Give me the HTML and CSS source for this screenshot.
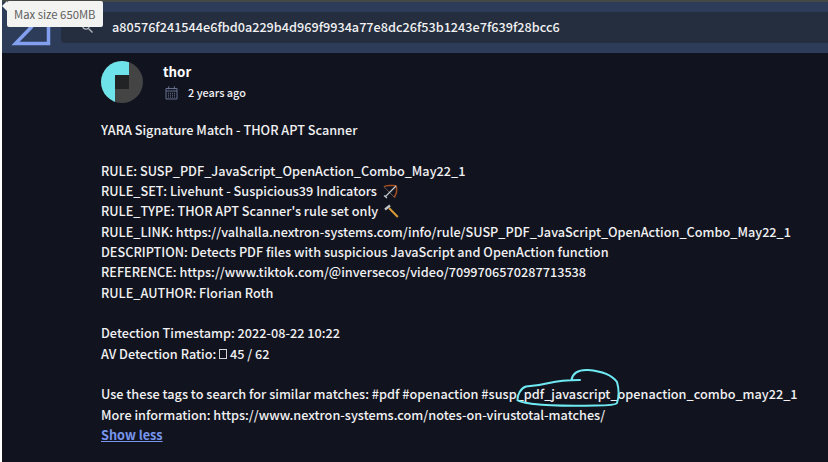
FILE: index.html
```
<!DOCTYPE html>
<html lang="en">
<head>
<meta charset="utf-8">
<title>YARA Signature Match</title>
<link rel="stylesheet" href="styles.css">
</head>
<body>
<header class="topbar">
  <svg class="logo" viewBox="0 0 40 36" aria-hidden="true"><path d="M4.500 32.500H37.500V1H4.500L20 16.500Z"/></svg>
  <div class="search">
    <svg class="search-icon" viewBox="0 0 12 12" aria-hidden="true"><circle cx="4" cy="4" r="3.200"/><path d="M6.500 6.500l4 4"/></svg>
    <span class="query">a80576f241544e6fbd0a229b4d969f9934a77e8dc26f53b1243e7f639f28bcc6</span>
  </div>
</header>
<div class="tooltip">Max size 650MB</div>
<main class="comment">
  <div class="author">
    <svg class="avatar" viewBox="0 0 42 42" aria-hidden="true">
      <clipPath id="round"><circle cx="21" cy="21" r="21"/></clipPath>
      <g clip-path="url(#round)"><path fill="#444" d="M0 0h42v42H0z"/><path fill="#6fe3ea" d="M0 0h28v14H14v28H0z"/><path fill="#222324" d="M14 14h14v14H14z"/></g>
    </svg>
    <div class="who">
      <div class="name">thor</div>
      <div class="meta">
        <svg class="calendar" viewBox="0 0 13 14" aria-hidden="true"><path d="M1 2.500h11v10.500H1zM1 5h11M3.700.3v3M9.300.3v3"/><path class="days" d="M3 7.300h7M3 9.200h7M3 11.100h7"/></svg>
        <span>2 years ago</span>
      </div>
    </div>
  </div>
  <div class="text">
    <p><span>YARA Signature Match - THOR APT Scanner</span></p>
    <p>&nbsp;</p>
    <p><span>RULE: SUSP_PDF_JavaScript_OpenAction_Combo_May22_1</span></p>
    <p><span>RULE_SET: Livehunt - Suspicious39 Indicators</span><svg class="emoji" viewBox="0 0 15 15" aria-hidden="true"><path stroke="#a34d20" stroke-width="1.500" d="M1 2.800C3 1 6 1.500 8 1.500S12 1 13.200 2C14 4 13.500 6 13.500 8S12 11 11.500 13.500"/><path stroke="#80675a" stroke-width=".8" d="M1 2.800l10.500 10.700"/><path stroke="#c5cbd0" stroke-width="1.200" d="M2.500 12.500L13 2M1 11.500l3 2.500"/></svg></p>
    <p><span>RULE_TYPE: THOR APT Scanner's rule set only</span><svg class="emoji" viewBox="0 0 15 15" aria-hidden="true"><path stroke="#d79a35" stroke-width="2" d="M5 4l8.800 9"/><path stroke="#c0c5c9" stroke-width="2.300" d="M1 5.500L6 1.500"/></svg></p>
    <p><span>RULE_LINK: https://valhalla.nextron-systems.com/info/rule/SUSP_PDF_JavaScript_OpenAction_Combo_May22_1</span></p>
    <p><span>DESCRIPTION: Detects PDF files with suspicious JavaScript and OpenAction function</span></p>
    <p><span>REFERENCE: https://www.tiktok.com/@inversecos/video/7099706570287713538</span></p>
    <p><span>RULE_AUTHOR: Florian Roth</span></p>
    <p>&nbsp;</p>
    <p><span>Detection Timestamp: 2022-08-22 10:22</span></p>
    <p><span>AV Detection Ratio: <i class="missing"></i> 45 / 62</span></p>
    <p>&nbsp;</p>
    <p><span>Use these tags to search for similar matches: #pdf #openaction #susp_pdf_javascript_openaction_combo_may22_1</span></p>
    <p><span>More information: https://www.nextron-systems.com/notes-on-virustotal-matches/</span></p>
    <p><a class="toggle" href="#">Show less</a></p>
  </div>
</main>
<svg class="scribble" viewBox="0 0 110 46" aria-hidden="true"><path d="M59.500 13.500C61 7 66 3.500 76 4C88 5 100 9 105 16C107 23 107 31 105 37C103 39.500 93 39.500 84 39.500C59 40 34 39.500 22 38C15 37 6 36 5.500 34C5 29 9 22 14 20.500C22 20 29 19 37 17C45 15 57 14 68 14"/></svg>
</body>
</html>
```
FILE: styles.css
```
* { box-sizing: border-box; }
body {
  margin: 0;
  height: 462px;
  overflow: hidden;
  background: #11141f;
  border-left: 2px solid #fff;
  color: #f1f1f3;
  font: 500 12.69px/20.35px "Noto Sans CJK SC", "Noto Sans", sans-serif;
}
.topbar {
  display: flex;
  height: 53px;
  padding: 10px 0 10px 9px;
  border-top: 2px solid #444945;
  background: #2d3c59;
}
.logo { width: 40px; height: 36px; margin-top: -1px; fill: none; stroke: #839ff0; stroke-width: 3.500; }
.search {
  display: flex;
  align-items: center;
  flex: 1;
  height: 31px;
  margin-left: 10px;
  padding-left: 21px;
  border-radius: 4px 0 0 4px;
  background: #242e3e;
}
.search-icon { width: 12px; height: 12px; fill: none; stroke: #b5bac2; stroke-width: 1.2; }
.query { margin-left: 18px; font-size: 12.67px; }
.tooltip {
  position: absolute;
  left: 7px;
  top: 1px;
  width: 96px;
  height: 26px;
  padding-left: 7px;
  border-radius: 2px;
  background: #f3f3f1;
  color: #606060;
  font-size: 11.3px;
  font-weight: 400;
  line-height: 27px;
  white-space: nowrap;
}
.tooltip::before {
  content: "";
  position: absolute;
  left: -5px;
  top: 0;
  border: 5px solid transparent;
  border-left: 0;
  border-right-color: #f3f3f1;
}
.comment { padding: 8px 0 0 99px; }
.author { display: flex; height: 59px; }
.avatar { width: 42px; height: 42px; }
.who { margin-left: 20px; }
.name { height: 22px; color: #fff; font-size: 13.3px; font-weight: 700; line-height: 22px; }
.meta { display: flex; align-items: center; gap: 10px; height: 19px; font-size: 10.9px; }
.calendar { width: 13px; height: 14px; margin-left: 2px; fill: none; stroke: #67708f; }
.days { stroke-dasharray: 1 1; }
.text p { display: flex; align-items: center; height: 20.35px; margin: 0; white-space: pre; }
.emoji { width: 15px; height: 15px; margin-left: 6px; fill: none; }
.missing { display: inline-block; width: 8px; height: 10px; border: 1px solid #d5d5d7; }
.toggle { color: #7895ed; font-weight: 700; text-decoration: underline; }
.scribble { position: absolute; left: 512px; top: 366px; width: 110px; height: 46px; fill: none; stroke: #6feaf3; stroke-width: 2; stroke-linecap: round; }
```
